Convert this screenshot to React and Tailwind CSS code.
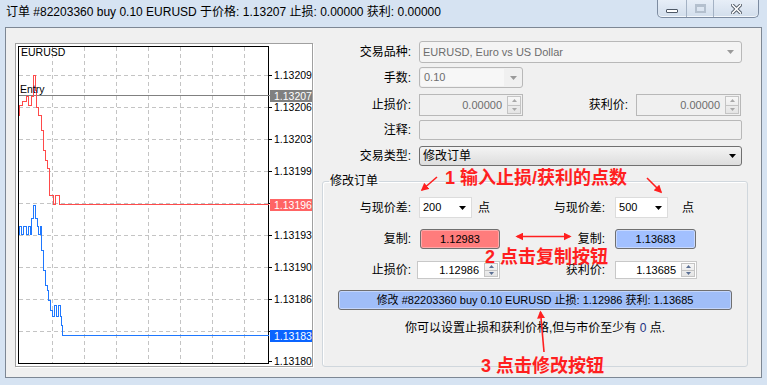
import React from 'react'

const redPath =
  'M19,115 V105 H22 V101 H26 V96 H28 V105 H31 V96 H33 V75 H35 V90 H36 V107 H38 V115 H41 V130 H43 V150 H45 V160 H47 V168 H49 V195 H53 V204 H55 V195 H59 V204 H268'
const bluePath =
  'M19,234 V226 H21 V234 H23 V226 H26 V234 H28 V226 H30 V234 H31 V218 H33 V205 H35 V218 H37 V226 H38 V234 H40 V226 H41 V250 H43 V270 H45 V285 H47 V290 H48 V300 H50 V310 H52 V316 H54 V305 H56 V316 H58 V305 H60 V316 H61 V325 H62 V335 H268'

const gridY = [75, 107, 139, 171, 203, 235, 267, 299, 331]
const gridX = [52, 84, 116, 148, 180, 212, 244]
const prices = [
  [75, '1.13209'], [107, '1.13206'], [139, '1.13203'], [171, '1.13199'],
  [235, '1.13193'], [267, '1.13190'], [299, '1.13186'], [361, '1.13180'],
]

function Chart() {
  return (
    <svg width="296" height="322" viewBox="16 44 296 322" className="block">
      <rect x="16" y="44" width="296" height="322" fill="#fff" />
      <g shapeRendering="crispEdges">
        {gridY.map((y) => (
          <line key={'h' + y} x1="19" x2="268" y1={y + 0.5} y2={y + 0.5} stroke="#c4c4c4" strokeDasharray="4 3" />
        ))}
        {gridX.map((x) => (
          <line key={'v' + x} x1={x + 0.5} x2={x + 0.5} y1="47" y2="363" stroke="#c4c4c4" strokeDasharray="4 3" />
        ))}
        <rect x="18.5" y="46.5" width="250" height="317" fill="none" stroke="#000" />
        {[...prices.map((p) => p[0]), 203, 331].map((y) => (
          <line key={'t' + y} x1="268" x2="272" y1={y + 0.5} y2={y + 0.5} stroke="#000" />
        ))}
        <line x1="19" x2="270" y1="95.5" y2="95.5" stroke="#808080" />
        <g transform="translate(0.5,0.5)">
          <path d={redPath} fill="none" stroke="#ff4a4a" />
          <path d={bluePath} fill="none" stroke="#1f78ff" />
        </g>
        <rect x="270" y="90" width="42" height="12" fill="#808080" />
        <rect x="270" y="199" width="42" height="12" fill="#ff6464" />
        <rect x="270" y="330" width="42" height="12" fill="#0a64ff" />
      </g>
      {prices.map(([y, p]) => (
        <text key={p} x="274" y={y + 4} fontSize="10.5" fontFamily="Liberation Sans" fill="#000">{p}</text>
      ))}
      <text x="21" y="56" fontSize="10.5" fontFamily="Liberation Sans" fill="#000">EURUSD</text>
      <text x="20" y="93" fontSize="10.5" fontFamily="Liberation Sans" fill="#000">Entry</text>
      <text x="274" y="100" fontSize="10.5" fontFamily="Liberation Sans" fill="#fff">1.13207</text>
      <text x="274" y="209" fontSize="10.5" fontFamily="Liberation Sans" fill="#fff">1.13196</text>
      <text x="274" y="340" fontSize="10.5" fontFamily="Liberation Sans" fill="#fff">1.13183</text>
    </svg>
  )
}

function Down({ color = '#000', w = 7, h = 4 }) {
  return (
    <svg width={w} height={h} viewBox="0 0 7 4" className="block shrink-0">
      <path d="M0,0 H7 L3.5,4 Z" fill={color} />
    </svg>
  )
}

function SpinButtons({ arrow }) {
  return (
    <div className="w-[14px] my-[1px] mr-[1px] flex flex-col border border-[#c4c4c4] bg-linear-to-b from-[#f7f7f7] to-[#e4e4e4]">
      <div className="flex-1 flex items-center justify-center border-b border-[#c4c4c4]">
        <svg width="5" height="3" viewBox="0 0 5 3"><path d="M0,3 H5 L2.5,0 Z" fill={arrow} /></svg>
      </div>
      <div className="flex-1 flex items-center justify-center">
        <svg width="5" height="3" viewBox="0 0 5 3"><path d="M0,0 H5 L2.5,3 Z" fill={arrow} /></svg>
      </div>
    </div>
  )
}

function Label({ className, children }) {
  return <div className={'shrink-0 text-right text-[12px] leading-[16px] ' + className}>{children}</div>
}

function WindowButtons() {
  return (
    <div className="flex h-[18px] mr-[8px] border border-t-0 border-[#7d8ca1] rounded-b-[5px] overflow-hidden bg-linear-to-b from-[#e7eef7] to-[#d2deec] shadow-[inset_0_-1px_0_#f4f8fc]">
      <div className="w-[28px] flex items-center justify-center">
        <div className="w-[12px] h-[4px] bg-white border border-[#4f5966] rounded-[1px] mt-[4px]" />
      </div>
      <div className="w-[27px] flex items-center justify-center border-l border-[#a4b2c4]">
        <div className="w-[11px] h-[9px] border-2 border-[#b4c0ce] border-t-[3px]" />
      </div>
      <div className="w-[45px] flex items-center justify-center border-l border-[#a4b2c4]">
        <svg width="11" height="10" viewBox="0 0 11 10">
          <path d="M1.5,1 L9.5,9 M9.5,1 L1.5,9" stroke="#4f5966" strokeWidth="3.4" strokeLinecap="square" />
          <path d="M1.5,1 L9.5,9 M9.5,1 L1.5,9" stroke="#fff" strokeWidth="1.6" strokeLinecap="square" />
        </svg>
      </div>
    </div>
  )
}

function Annotations() {
  return (
    <>
      <div className="absolute left-[445px] top-[168px] text-[18px] leading-[20px] font-bold text-[#ff1f1f] whitespace-nowrap">1 输入止损/获利的点数</div>
      <div className="absolute left-[485px] top-[247px] text-[18px] leading-[20px] font-bold text-[#ff1f1f] whitespace-nowrap">2 点击复制按钮</div>
      <div className="absolute left-[481px] top-[356px] text-[18px] leading-[20px] font-bold text-[#ff1f1f] whitespace-nowrap">3 点击修改按钮</div>
      <svg width="767" height="385" className="absolute left-0 top-0 pointer-events-none">
        <defs>
          <marker id="ah" viewBox="0 0 10 10" refX="8" refY="5" markerWidth="5" markerHeight="5" orient="auto-start-reverse">
            <path d="M0,0 L10,5 L0,10 Z" fill="#ff1f1f" />
          </marker>
        </defs>
        <g stroke="#ff1f1f" strokeWidth="1.6" fill="none">
          <line x1="437" y1="177" x2="422" y2="190" markerEnd="url(#ah)" />
          <line x1="647" y1="178" x2="661" y2="192" markerEnd="url(#ah)" />
          <line x1="517" y1="236.5" x2="570" y2="236.5" markerStart="url(#ah)" markerEnd="url(#ah)" />
          <line x1="544" y1="352" x2="540.5" y2="312" markerEnd="url(#ah)" />
        </g>
      </svg>
    </>
  )
}

export default function App() {
  return (
    <div className="relative w-[767px] h-[385px] overflow-hidden bg-[#d6e3f2] text-black font-['Liberation_Sans','Noto_Sans_CJK_SC',sans-serif]">
      <div className="h-[27px] flex items-start">
        <div className="pl-[6px] pt-[4px] text-[12px] leading-[16px] whitespace-nowrap">
          订单 #82203360 buy 0.10 EURUSD 于价格: 1.13207 止损: 0.00000 获利: 0.00000
        </div>
        <div className="ml-auto">
          <WindowButtons />
        </div>
      </div>

      <div className="ml-[5px] w-[757px] h-[351px] border border-[#7d8794] bg-[#f0f0f0] flex items-start">
        <div className="ml-[9px] mt-[15px] w-[298px] h-[324px] border border-[#a0a0a0] shadow-[1px_1px_0_#ffffff]">
          <Chart />
        </div>

        <div className="ml-[9px] w-[426px] pt-[13px] flex flex-col">
          <div className="flex items-center h-[22px]">
            <Label className="w-[89px]">交易品种:</Label>
            <div className="ml-[8px] w-[323px] h-[22px] border border-[#b8b8b8] rounded-[3px] bg-[#f4f4f4] flex items-center pl-[3px] pr-[7px] text-[11px] text-[#6d6d6d]">
              <span className="flex-1">EURUSD, Euro vs US Dollar</span>
              <Down color="#9a9a9a" />
            </div>
          </div>

          <div className="flex items-center h-[21px] mt-[4px]">
            <Label className="w-[89px]">手数:</Label>
            <div className="ml-[8px] w-[104px] h-[21px] border border-[#b8b8b8] rounded-[3px] bg-[#f0f0f0] flex items-center">
              <div className="ml-[1px] w-[83px] h-[17px] bg-[#f7f7f7] flex items-center pl-[3px] text-[11px] text-[#6d6d6d]">0.10</div>
              <div className="flex-1 flex justify-center"><Down color="#9a9a9a" /></div>
            </div>
          </div>

          <div className="flex items-center h-[22px] mt-[6px]">
            <Label className="w-[89px]">止损价:</Label>
            <div className="ml-[8px] w-[104px] h-[22px] border border-[#b8b8b8] bg-[#f0f0f0] flex">
              <div className="flex-1 flex items-center justify-end pr-[5px] text-[11px] text-[#6d6d6d]">0.00000</div>
              <SpinButtons arrow="#a8a8a8" />
            </div>
            <Label className="w-[105px]">获利价:</Label>
            <div className="ml-[8px] w-[105px] h-[22px] border border-[#b8b8b8] bg-[#f0f0f0] flex">
              <div className="flex-1 flex items-center justify-end pr-[5px] text-[11px] text-[#6d6d6d]">0.00000</div>
              <SpinButtons arrow="#a8a8a8" />
            </div>
          </div>

          <div className="flex items-center h-[20px] mt-[4px]">
            <Label className="w-[89px]">注释:</Label>
            <div className="ml-[8px] w-[323px] h-[20px] border border-[#b8b8b8] rounded-[2px] bg-[#f0f0f0]" />
          </div>

          <div className="flex items-center h-[20px] mt-[6px]">
            <Label className="w-[89px]">交易类型:</Label>
            <div className="ml-[8px] w-[323px] h-[20px] border border-[#707070] rounded-[3px] bg-linear-to-b from-[#f4f4f4] to-[#dddddd] flex items-center pl-[3px] pr-[5px] text-[12px]">
              <span className="flex-1 leading-[16px]">修改订单</span>
              <Down />
            </div>
          </div>

          <fieldset className="mt-[7px] h-[194px] border border-[#d0d7dd] rounded-[3px] shadow-[inset_1px_1px_0_#ffffff]">
            <legend className="ml-[6px] px-[1px] text-[12px] leading-[16px]">修改订单</legend>

            <div className="flex items-center h-[21px] mt-[8px]">
              <Label className="w-[88px]">与现价差:</Label>
              <div className="ml-[8px] w-[53px] h-[21px] bg-white border border-[#dcdcdc] flex items-center pl-[3px] pr-[5px] text-[11px]">
                <span className="flex-1">200</span>
                <Down />
              </div>
              <div className="ml-[6px] text-[12px] leading-[16px]">点</div>
              <Label className="w-[115px]">与现价差:</Label>
              <div className="ml-[10px] w-[53px] h-[21px] bg-white border border-[#dcdcdc] flex items-center pl-[3px] pr-[5px] text-[11px]">
                <span className="flex-1">500</span>
                <Down />
              </div>
              <div className="ml-[14px] text-[12px] leading-[16px]">点</div>
            </div>

            <div className="flex items-center h-[20px] mt-[11px]">
              <Label className="w-[88px]">复制:</Label>
              <div className="ml-[9px] w-[80px] h-[20px] border border-[#707070] rounded-[3px] bg-[#ff7c7c] shadow-[inset_0_0_0_1px_#ffa8a8] flex items-center justify-center text-[11px]">1.12983</div>
              <Label className="w-[105px]">复制:</Label>
              <div className="ml-[10px] w-[81px] h-[20px] border border-[#707070] rounded-[3px] bg-[#a2c0ff] shadow-[inset_0_0_0_1px_#c8d9ff] flex items-center justify-center text-[11px]">1.13683</div>
            </div>

            <div className="flex items-center h-[18px] mt-[12px]">
              <Label className="w-[88px]">止损价:</Label>
              <div className="ml-[6px] w-[83px] h-[18px] border border-[#c8c8c8] bg-white flex">
                <div className="flex-1 flex items-center justify-end pr-[5px] text-[11px]">1.12986</div>
                <SpinButtons arrow="#5a6f94" />
              </div>
              <Label className="w-[105px]">获利价:</Label>
              <div className="ml-[10px] w-[82px] h-[18px] border border-[#c8c8c8] bg-white flex">
                <div className="flex-1 flex items-center justify-end pr-[5px] text-[11px]">1.13685</div>
                <SpinButtons arrow="#5a6f94" />
              </div>
            </div>

            <div className="mt-[11px] ml-[15px] w-[394px] h-[20px] border border-[#707070] rounded-[3px] bg-[#a0bef8] shadow-[inset_0_0_0_1px_#c4d6fb] flex items-center justify-center text-[11px] whitespace-nowrap">
              修改 #82203360 buy 0.10 EURUSD 止损: 1.12986 获利: 1.13685
            </div>

            <div className="mt-[10px] text-center text-[12px] leading-[16px]">
              你可以设置止损和获利价格,但与市价至少有 <span className="text-[#1c2f80]">0</span> 点.
            </div>
          </fieldset>
        </div>
      </div>

      <Annotations />
    </div>
  )
}
